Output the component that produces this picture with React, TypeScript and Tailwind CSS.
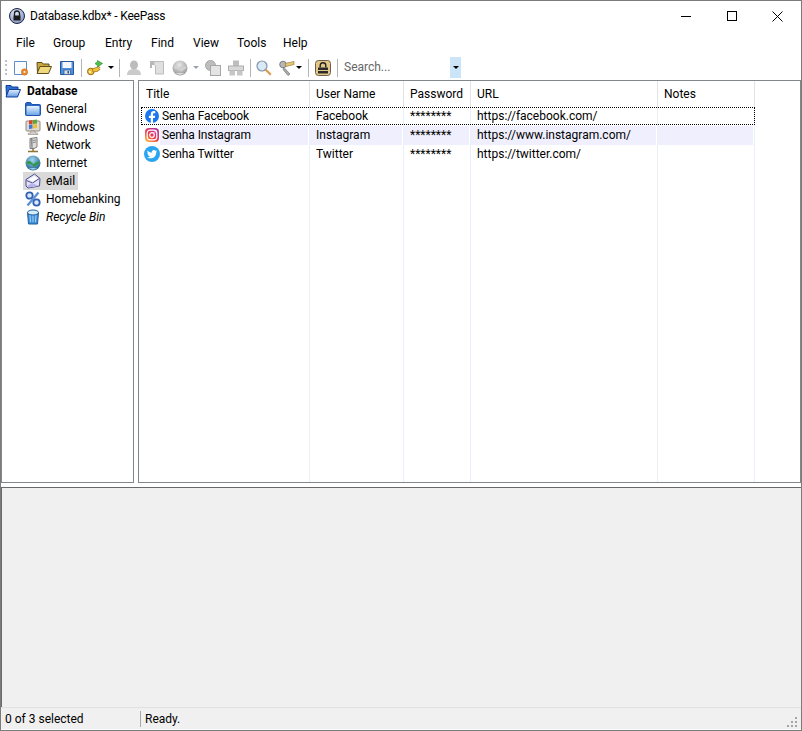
import type { ReactNode } from "react"

const font = { fontFamily: 'Roboto, sans-serif' }

type Column = { name: string; width: string; cells: string[] }

const columns: Column[] = [
  { name: "Title", width: "w-[171px]", cells: ["Senha Facebook", "Senha Instagram", "Senha Twitter"] },
  { name: "User Name", width: "w-[94px]", cells: ["Facebook", "Instagram", "Twitter"] },
  { name: "Password", width: "w-[67px]", cells: ["********", "********", "********"] },
  { name: "URL", width: "w-[187px]", cells: ["https://facebook.com/", "https://www.instagram.com/", "https://twitter.com/"] },
  { name: "Notes", width: "w-[97px]", cells: ["", "", ""] },
]

const menus = [
  { label: "File", width: "w-[37px]" },
  { label: "Group", width: "w-[52px]" },
  { label: "Entry", width: "w-[46px]" },
  { label: "Find", width: "w-[42px]" },
  { label: "View", width: "w-[44px]" },
  { label: "Tools", width: "w-[46px]" },
  { label: "Help", width: "w-[40px]" },
]

function Svg({ children, size = 16 }: { children: ReactNode; size?: number }) {
  return (
    <svg width={size} height={size} viewBox="0 0 16 16" className="block shrink-0">
      {children}
    </svg>
  )
}

function FolderOpen() {
  return (
    <Svg>
      <defs>
        <linearGradient id="fo" x1="0" y1="0" x2="0" y2="1">
          <stop offset="0" stopColor="#e4effc" />
          <stop offset="1" stopColor="#5f9be6" />
        </linearGradient>
      </defs>
      <path d="M1 2.500h5l1 1.500h6v3H4.500L1.500 13.500z" fill="#2f6fd0" stroke="#123f9a" />
      <path d="M4 6.500h11.500l-3 7.500H1z" fill="url(#fo)" stroke="#123f9a" />
    </Svg>
  )
}

function FolderClosed() {
  return (
    <Svg>
      <defs>
        <linearGradient id="fc" x1="0" y1="0" x2="0" y2="1">
          <stop offset="0" stopColor="#e8f2fd" />
          <stop offset="1" stopColor="#6ea6ea" />
        </linearGradient>
      </defs>
      <path d="M.5 3c0-1 .5-1.500 1.500-1.500h3.500l1.500 2h7.500c.7 0 1 .3 1 1v9c0 .7-.3 1-1 1H1.500c-.7 0-1-.3-1-1z" fill="#2a68c8" stroke="#1d55ae" />
      <rect x="1.500" y="5" width="13" height="9" rx="1" fill="url(#fc)" />
    </Svg>
  )
}

function WindowsIcon() {
  return (
    <Svg>
      <rect x="1" y="2" width="14" height="10" rx="1" fill="#dedad3" stroke="#8f8a82" />
      <path d="M4 1.500l3.500-.5v4L4 5.500z" fill="#d8432e" />
      <path d="M8 1l4-.5v4L8 5z" fill="#5aa83a" />
      <path d="M4 6l3.500-.5v4L4 10z" fill="#3b78d8" />
      <path d="M8 5.500l4-.5v4l-4 .5z" fill="#efc030" />
      <path d="M6 12h4l.5 2h2l.5 1.500H3L3.500 14h2z" fill="#d2cec7" stroke="#8f8a82" strokeWidth="0.600" />
    </Svg>
  )
}

function NetworkIcon() {
  return (
    <Svg>
      <path d="M5 1.500L12 .5v9.500l-3 1.500H5z" fill="#dcdcdc" stroke="#7d7d7d" />
      <path d="M5 1.500l2 .5v9.500" fill="#9f9f9f" stroke="#7d7d7d" />
      <path d="M8 3.500l3-.5M8 5.500l3-.5" stroke="#8a8a8a" />
      <path d="M8 11.500V14M3 14.500h10" stroke="#8f7338" strokeWidth="1.500" />
    </Svg>
  )
}

function GlobeIcon({ gray = false }: { gray?: boolean }) {
  const id = gray ? "gg" : "gc"
  return (
    <Svg>
      <defs>
        <radialGradient id={id} cx="0.45" cy="0.3" r="0.8">
          <stop offset="0" stopColor={gray ? "#e8e8e8" : "#9fd6f2"} />
          <stop offset="1" stopColor={gray ? "#8f8f8f" : "#12507f"} />
        </radialGradient>
      </defs>
      <circle cx="8" cy="8" r="7.500" fill={`url(#${id})`} />
      <path d="M1.500 7c2-1.500 4-1 5 .5s2 2 3 1 1.500-2.500 5-2c-.5 3-3 2.500-4 4.500-1.500 1.500-2.500-1-4-1.500S2.500 9.500 1.500 7z" fill={gray ? "#d2d2d2" : "#2f9a3f"} />
      <path d="M4 13.500c2 1.500 6 1.500 8 0-2-.7-6-.7-8 0z" fill={gray ? "#e0e0e0" : "#9fd6f2"} />
    </Svg>
  )
}

function MailIcon() {
  return (
    <Svg>
      <path d="M1 6.500L9.500 1 15 5.500 14.500 13 3 15 1 13z" fill="#e4e2f8" stroke="#4d4d8c" />
      <path d="M1.500 7.500L7.500 10l7-4.500" fill="none" stroke="#4d4d8c" />
      <path d="M4 6.500L9.500 3l3 2.500L7.500 8.500z" fill="#fff" />
      <path d="M2 13l5-3 7 3-10 1.500z" fill="#b9b6ea" />
    </Svg>
  )
}

function PercentIcon() {
  return (
    <Svg>
      <circle cx="4.500" cy="4.500" r="3.200" fill="#dbe8fa" stroke="#2f60b0" strokeWidth="1.800" />
      <circle cx="11.500" cy="11.500" r="3.200" fill="#dbe8fa" stroke="#2f60b0" strokeWidth="1.800" />
      <path d="M13.500 1.500L2.500 14.500" stroke="#5f8fd6" strokeWidth="2.400" />
    </Svg>
  )
}

function BinIcon() {
  return (
    <Svg>
      <path d="M2.500 3.500L3.500 15h9l1-11.500z" fill="#3f8fd8" stroke="#1f5fa0" />
      <path d="M5 6l.5 7M8 6v7M11 6l-.5 7" stroke="#a9d2f5" />
      <ellipse cx="8" cy="3.500" rx="5.500" ry="2.500" fill="#d9ecfb" stroke="#1f5fa0" />
    </Svg>
  )
}

function FacebookIcon() {
  return (
    <Svg>
      <circle cx="8" cy="8" r="7" fill="#1877f2" />
      <path d="M9 15v-5h1.800l.4-2.200H9V6.400c0-.7.300-1.200 1.200-1.200h1.100V3.300C11 3.200 10.400 3.100 9.800 3.100 8 3.100 6.800 4.200 6.800 6.100v1.700H4.900V10h1.900v5z" fill="#fff" />
    </Svg>
  )
}

function InstagramIcon() {
  return (
    <Svg>
      <defs>
        <linearGradient id="ig" x1="0.1" y1="1" x2="0.9" y2="0">
          <stop offset="0" stopColor="#fdc33d" />
          <stop offset="0.45" stopColor="#ec3b52" />
          <stop offset="1" stopColor="#a72fb8" />
        </linearGradient>
      </defs>
      <rect x="1" y="1" width="14" height="14" rx="4" fill="url(#ig)" />
      <rect x="3.200" y="3.200" width="9.600" height="9.600" rx="2.800" fill="none" stroke="#fff" strokeWidth="1.200" />
      <circle cx="8" cy="8" r="2.300" fill="none" stroke="#fff" strokeWidth="1.200" />
      <circle cx="11" cy="5" r="0.700" fill="#fff" />
    </Svg>
  )
}

function TwitterIcon() {
  return (
    <Svg>
      <circle cx="8" cy="8" r="8" fill="#2ba5f0" />
      <path d="M13 5c-.4.2-.8.3-1.200.4.4-.3.800-.7.900-1.200-.4.300-.9.400-1.300.5a2.100 2.100 0 0 0-3.600 1.900C6.100 6.500 4.600 5.700 3.600 4.400c-.6 1-.3 2.200.6 2.800-.3 0-.6-.1-.9-.3 0 1 .7 1.900 1.700 2.100-.3.100-.6.100-.9 0 .3.900 1.100 1.400 2 1.500-.9.700-2 1-3.100.900 3.900 2.400 9.500.3 9.300-5.700.4-.2.700-.5 1-.9z" fill="#fff" />
    </Svg>
  )
}

const rowIcons = [<FacebookIcon key="f" />, <InstagramIcon key="i" />, <TwitterIcon key="t" />]

function NewIcon() {
  return (
    <Svg>
      <path d="M1.500 1.500h12v13h-12z" fill="#fbfcfe" stroke="#5d8fc7" />
      <circle cx="11.500" cy="12" r="3.200" fill="#e58a2c" stroke="#c76a1a" strokeWidth="0.500" />
      <circle cx="11.500" cy="12" r="1" fill="#fff2d8" />
    </Svg>
  )
}

function OpenIcon() {
  return (
    <Svg>
      <path d="M1 2.500h5l1 1.500h6v3H4.500L1.500 13z" fill="#c9a93f" stroke="#5e4d1a" />
      <path d="M4 6.500h11.500l-3 7H1z" fill="#efd97e" stroke="#5e4d1a" />
    </Svg>
  )
}

function SaveIcon() {
  return (
    <Svg>
      <path d="M1.500 1.500h13v13h-13z" fill="#4f8fdc" stroke="#25589e" />
      <rect x="3.500" y="2" width="9" height="6" fill="#f4f8fd" />
      <rect x="5" y="10" width="6.500" height="4.500" fill="#dcdcdc" stroke="#25589e" strokeWidth="0.700" />
      <rect x="8.500" y="11" width="1.500" height="2.500" fill="#25589e" />
    </Svg>
  )
}

function KeyIcon() {
  return (
    <Svg>
      <circle cx="3.800" cy="11.500" r="3.300" fill="#f2c13b" stroke="#9a6c10" />
      <circle cx="3" cy="12" r="0.900" fill="#fff" />
      <path d="M5.500 9l6-2.500 1.500 1-1 1 1 1.200-1.500.5-.5 1-5 .8z" fill="#f2c13b" stroke="#9a6c10" strokeWidth="0.700" />
      <path d="M8 3.500L10.500 2V.5l5 3L10.500 7V5.500z" fill="#4cc04a" stroke="#23862a" strokeWidth="0.600" />
    </Svg>
  )
}

function PersonIcon() {
  return (
    <Svg>
      <ellipse cx="8" cy="5" rx="4" ry="4.500" fill="#bcbcbc" />
      <path d="M1 15c0-4 2.500-6 7-6s7 2 7 6z" fill="#cbcbcb" />
    </Svg>
  )
}

function NoteIcon() {
  return (
    <Svg>
      <path d="M1 1h4v4H3v3H1z" fill="#b8b8b8" />
      <path d="M5 1.500h9.500V14h-8V6L5 4.500z" fill="#e0e0e0" stroke="#bcbcbc" />
    </Svg>
  )
}

function CopyIcon() {
  return (
    <Svg>
      <circle cx="5.500" cy="5.500" r="5" fill="#bdbdbd" stroke="#a6a6a6" />
      <rect x="5.500" y="5.500" width="10" height="10" fill="#e4e4e4" stroke="#a6a6a6" />
    </Svg>
  )
}

function PluginIcon() {
  return (
    <Svg>
      <rect x="5" y="0.500" width="6" height="5.500" fill="#bebebe" />
      <rect x="0.500" y="6" width="15" height="4.500" fill="#d8d8d8" stroke="#b0b0b0" />
      <rect x="1.500" y="10.500" width="5.500" height="5" fill="#c6c6c6" />
      <rect x="9" y="10.500" width="5.500" height="5" fill="#c6c6c6" />
    </Svg>
  )
}

function SearchIcon() {
  return (
    <Svg>
      <circle cx="6" cy="6" r="5" fill="#d8e9f8" stroke="#8494a8" strokeWidth="1.200" />
      <path d="M9.800 9.800l5 5" stroke="#dd9a4a" strokeWidth="2.200" />
    </Svg>
  )
}

function KeysIcon() {
  return (
    <Svg>
      <circle cx="4" cy="4.500" r="3.300" fill="#b7b7b7" stroke="#7c7c7c" />
      <path d="M6 3.500l9-2v3l-8 2z" fill="#e6c878" stroke="#97803c" strokeWidth="0.700" />
      <path d="M5 7.500l6 6.500-2 1.500-5-6z" fill="#a8a8a8" stroke="#7c7c7c" strokeWidth="0.700" />
    </Svg>
  )
}

function LockIcon() {
  return (
    <Svg>
      <rect x="0.500" y="0.500" width="15" height="15" rx="3" fill="#e4c88a" stroke="#6d5f49" />
      <path d="M5.200 7.500V5.500a2.800 2.800 0 0 1 5.600 0v2" fill="none" stroke="#222" strokeWidth="1.400" />
      <rect x="3" y="7.500" width="10" height="6" fill="#2a2a2a" />
      <path d="M3 10.500h10" stroke="#e4c88a" />
    </Svg>
  )
}

function Caret({ disabled = false }: { disabled?: boolean }) {
  return (
    <span
      className={`block h-0 w-0 border-x-[3px] border-t-[3px] border-x-transparent ${
        disabled ? "border-t-gray-400" : "border-t-black"
      }`}
    />
  )
}

function Sep({ className = "" }: { className?: string }) {
  return <span className={`block h-[18px] w-px bg-[#b4b4b4] ${className}`} />
}

function TreeItem({
  icon,
  label,
  className = "",
}: {
  icon: ReactNode
  label: string
  className?: string
}) {
  return (
    <div className="flex h-[18px] items-center pl-[21px]">
      <span className={`flex h-[18px] items-center pl-[2px] pr-[3px] ${className}`}>
        {icon}
        <span className="ml-[5px]">{label}</span>
      </span>
    </div>
  )
}

export default function App() {
  return (
    <div
      style={font}
      className="flex h-[731px] w-[802px] flex-col overflow-hidden border border-[#7b7b7b] bg-white text-[12px] leading-none text-black"
    >
      <div className="flex h-[30px] shrink-0 items-center">
        <svg width="16" height="16" viewBox="0 0 16 16" className="ml-[8px] block shrink-0">
          <defs>
            <radialGradient id="tb" cx="0.4" cy="0.3" r="0.8">
              <stop offset="0" stopColor="#dfe6f6" />
              <stop offset="1" stopColor="#7c8cc0" />
            </radialGradient>
          </defs>
          <circle cx="8" cy="8" r="7.500" fill="url(#tb)" stroke="#1d2440" />
          <path d="M5.500 8V5.500a2.500 2.500 0 0 1 5 0V8" fill="none" stroke="#1a1a1a" strokeWidth="1.300" />
          <rect x="4.500" y="7.500" width="7" height="5" fill="#1a1a1a" />
        </svg>
        <span className="ml-[5px] tracking-[-0.2px]">Database.kdbx* - KeePass</span>
        <div className="ml-auto flex items-center">
          <span className="mr-[36px] h-px w-[10px] bg-black" />
          <span className="mr-[35px] h-[10px] w-[10px] border border-black" />
          <svg width="11" height="11" viewBox="0 0 11 11" className="mr-[18px] block">
            <path d="M.5.500l10 10M10.500.500l-10 10" stroke="#000" />
          </svg>
        </div>
      </div>

      <div className="flex h-[24px] shrink-0 items-center pl-[15px]">
        {menus.map((m) => (
          <span key={m.label} className={m.width}>{m.label}</span>
        ))}
      </div>

      <div className="flex h-[25px] shrink-0 items-center">
        <span className="ml-[4px] flex h-[18px] w-[2px] flex-col justify-between py-[1px]">
          <span className="h-[2px] w-[2px] bg-[#c0c0c0]" />
          <span className="h-[2px] w-[2px] bg-[#c0c0c0]" />
          <span className="h-[2px] w-[2px] bg-[#c0c0c0]" />
          <span className="h-[2px] w-[2px] bg-[#c0c0c0]" />
        </span>
        <div className="ml-[6px] flex items-center gap-[7px]">
          <NewIcon />
          <OpenIcon />
          <SaveIcon />
        </div>
        <Sep className="ml-[6px]" />
        <span className="ml-[5px]"><KeyIcon /></span>
        <span className="ml-[5px]"><Caret /></span>
        <Sep className="ml-[5px]" />
        <div className="ml-[6px] flex items-center gap-[7px]">
          <PersonIcon />
          <NoteIcon />
          <GlobeIcon gray />
        </div>
        <span className="ml-[5px]"><Caret disabled /></span>
        <div className="ml-[6px] flex items-center gap-[7px]">
          <CopyIcon />
          <PluginIcon />
        </div>
        <Sep className="ml-[6px]" />
        <span className="ml-[5px]"><SearchIcon /></span>
        <span className="ml-[7px]"><KeysIcon /></span>
        <span className="ml-[1px]"><Caret /></span>
        <Sep className="ml-[6px]" />
        <span className="ml-[6px]"><LockIcon /></span>
        <Sep className="ml-[6px]" />
        <div className="ml-[6px] flex h-[21px] w-[117px] items-center justify-between">
          <span className="pb-[2px] text-[#666]">Search...</span>
          <span className="flex h-[21px] w-[11px] items-center justify-center bg-[#cce4f7]">
            <Caret />
          </span>
        </div>
      </div>

      <div className="flex h-[403px] shrink-0 gap-[4px]">
        <div className="w-[133px] shrink-0 border border-[#82878c] pt-[1px]">
          <div className="flex h-[18px] items-center pl-[3px] font-bold">
            <FolderOpen />
            <span className="ml-[6px]">Database</span>
          </div>
          <TreeItem icon={<FolderClosed />} label="General" />
          <TreeItem icon={<WindowsIcon />} label="Windows" />
          <TreeItem icon={<NetworkIcon />} label="Network" />
          <TreeItem icon={<GlobeIcon />} label="Internet" />
          <TreeItem icon={<MailIcon />} label="eMail" className="bg-[#d9d9d9]" />
          <TreeItem icon={<PercentIcon />} label="Homebanking" />
          <TreeItem icon={<BinIcon />} label="Recycle Bin" className="italic" />
        </div>

        <div className="relative flex min-w-0 flex-1 border border-[#82878c]">
          {columns.map((col, i) => (
            <div key={col.name} className={`${col.width} shrink-0 border-r border-[#e9f0f7]`}>
              <div className={`-mr-px flex h-[26px] items-center border-r border-[#e3e3e3] ${i === 0 ? "pl-[7px]" : "pl-[6px]"}`}>
                {col.name}
              </div>
              {col.cells.map((cell, r) => (
                <div key={r} className={`flex h-[19px] items-center ${i === 0 ? "pl-[5px] tracking-[-0.1px]" : ""}`}>
                  {i === 0 && <span className="-mt-px">{rowIcons[r]}</span>}
                  <span
                    className={`mr-px flex h-full flex-1 items-center pb-[2px] ${i === 0 ? "pl-[2px]" : "pl-[6px]"} ${
                      r === 1 ? "bg-[#efeffd]" : ""
                    }`}
                  >
                    {cell}
                  </span>
                </div>
              ))}
            </div>
          ))}
          <div className="absolute left-[2px] top-[26px] h-[18px] w-[614px] border border-dotted border-black" />
        </div>
      </div>

      <div className="mt-[4px] h-[220px] shrink-0 border-l border-t border-[#696969] bg-[#f0f0f0]" />

      <div className="relative flex h-[22px] shrink-0 items-center border-t border-[#e0e0e0] bg-[#f0f0f0] pt-[1px]">
        <span className="w-[140px] border-r border-[#a8a8a8] pl-[4px] leading-[16px]">0 of 3 selected</span>
        <span className="ml-[4px]">Ready.</span>
        <svg width="11" height="11" viewBox="0 0 11 11" className="absolute bottom-[1px] right-[3px] block">
          <path d="M8 0h2v2H8zM4 4h2v2H4zM8 4h2v2H8zM0 8h2v2H0zM4 8h2v2H4zM8 8h2v2H8z" fill="#a5a5a5" />
        </svg>
      </div>
    </div>
  )
}
